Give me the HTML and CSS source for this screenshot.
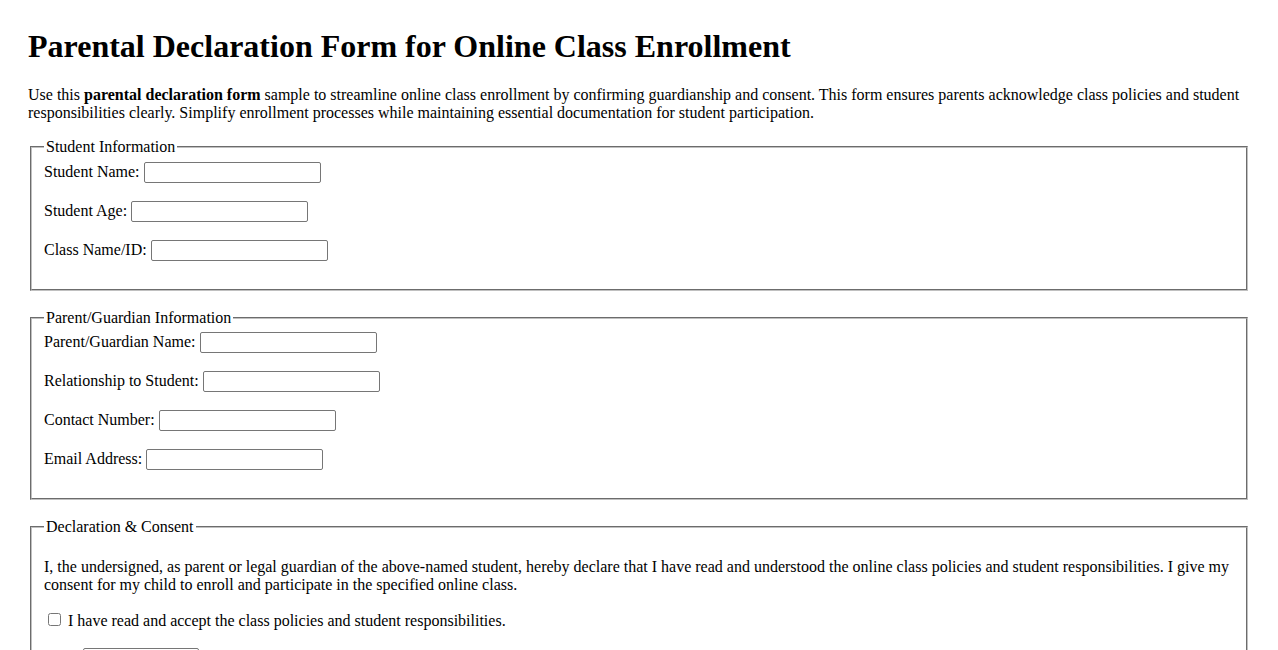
FILE: index.html
```html
<!DOCTYPE html>
<html lang="en">
<head>
<meta charset="utf-8">
<title>Parental Declaration Form for Online Class Enrollment</title>
<link rel="stylesheet" href="styles.css">
</head>
<body>
<h1 class="title">Parental Declaration Form for Online Class Enrollment</h1>
<p class="intro">Use this <strong>parental declaration form</strong> sample to streamline online class enrollment by confirming guardianship and consent. This form ensures parents acknowledge class policies and student responsibilities clearly. Simplify enrollment processes while maintaining essential documentation for student participation.</p>
<form class="form">
  <fieldset class="group">
    <legend class="group-title">Student Information</legend>
    <div class="field"><label for="sname">Student Name:</label> <input class="text" type="text" id="sname"></div>
    <div class="field"><label for="sage">Student Age:</label> <input class="text" type="text" id="sage"></div>
    <div class="field"><label for="cls">Class Name/ID:</label> <input class="text" type="text" id="cls"></div>
  </fieldset>
  <fieldset class="group">
    <legend class="group-title">Parent/Guardian Information</legend>
    <div class="field"><label for="pname">Parent/Guardian Name:</label> <input class="text" type="text" id="pname"></div>
    <div class="field"><label for="rel">Relationship to Student:</label> <input class="text" type="text" id="rel"></div>
    <div class="field"><label for="phone">Contact Number:</label> <input class="text" type="text" id="phone"></div>
    <div class="field"><label for="email">Email Address:</label> <input class="text" type="text" id="email"></div>
  </fieldset>
  <fieldset class="group">
    <legend class="group-title">Declaration &amp; Consent</legend>
    <p class="declaration">I, the undersigned, as parent or legal guardian of the above-named student, hereby declare that I have read and understood the online class policies and student responsibilities. I give my consent for my child to enroll and participate in the specified online class.</p>
    <div class="field"><input class="check" type="checkbox" id="agree"> <label for="agree">I have read and accept the class policies and student responsibilities.</label></div>
    <div class="field"><label for="date">Date:</label> <input class="text date" type="text" id="date"></div>
  </fieldset>
</form>
</body>
</html>
```
FILE: styles.css
```css
html, body {
  background: #ffffff;
}
body {
  margin: 28px;
  font-family: "Liberation Serif", "Times New Roman", serif;
  font-size: 16px;
  color: #000000;
}
.title {
  font-size: 32px;
  font-weight: bold;
  margin: 0 0 21px;
}
.intro {
  margin: 16px 0;
}
.group {
  margin: 0 2px 18px;
  padding: 5.6px 12px 10px;
  border: 2px groove #c0c0c0;
}
.group-title {
  padding: 0 2px;
}
.field {
  margin-bottom: 18px;
}
.text {
  box-sizing: border-box;
  width: 177px;
  height: 21px;
  padding: 1px 2px;
  border: 1px solid #767676;
  border-radius: 2px;
  font-family: Arial, "Liberation Sans", sans-serif;
  font-size: 13.33px;
  vertical-align: baseline;
}
.date {
  width: 116px;
}
.check {
  margin: 3px 3px 3px 4px;
}
.declaration {
  margin: 16px 0;
}
```
